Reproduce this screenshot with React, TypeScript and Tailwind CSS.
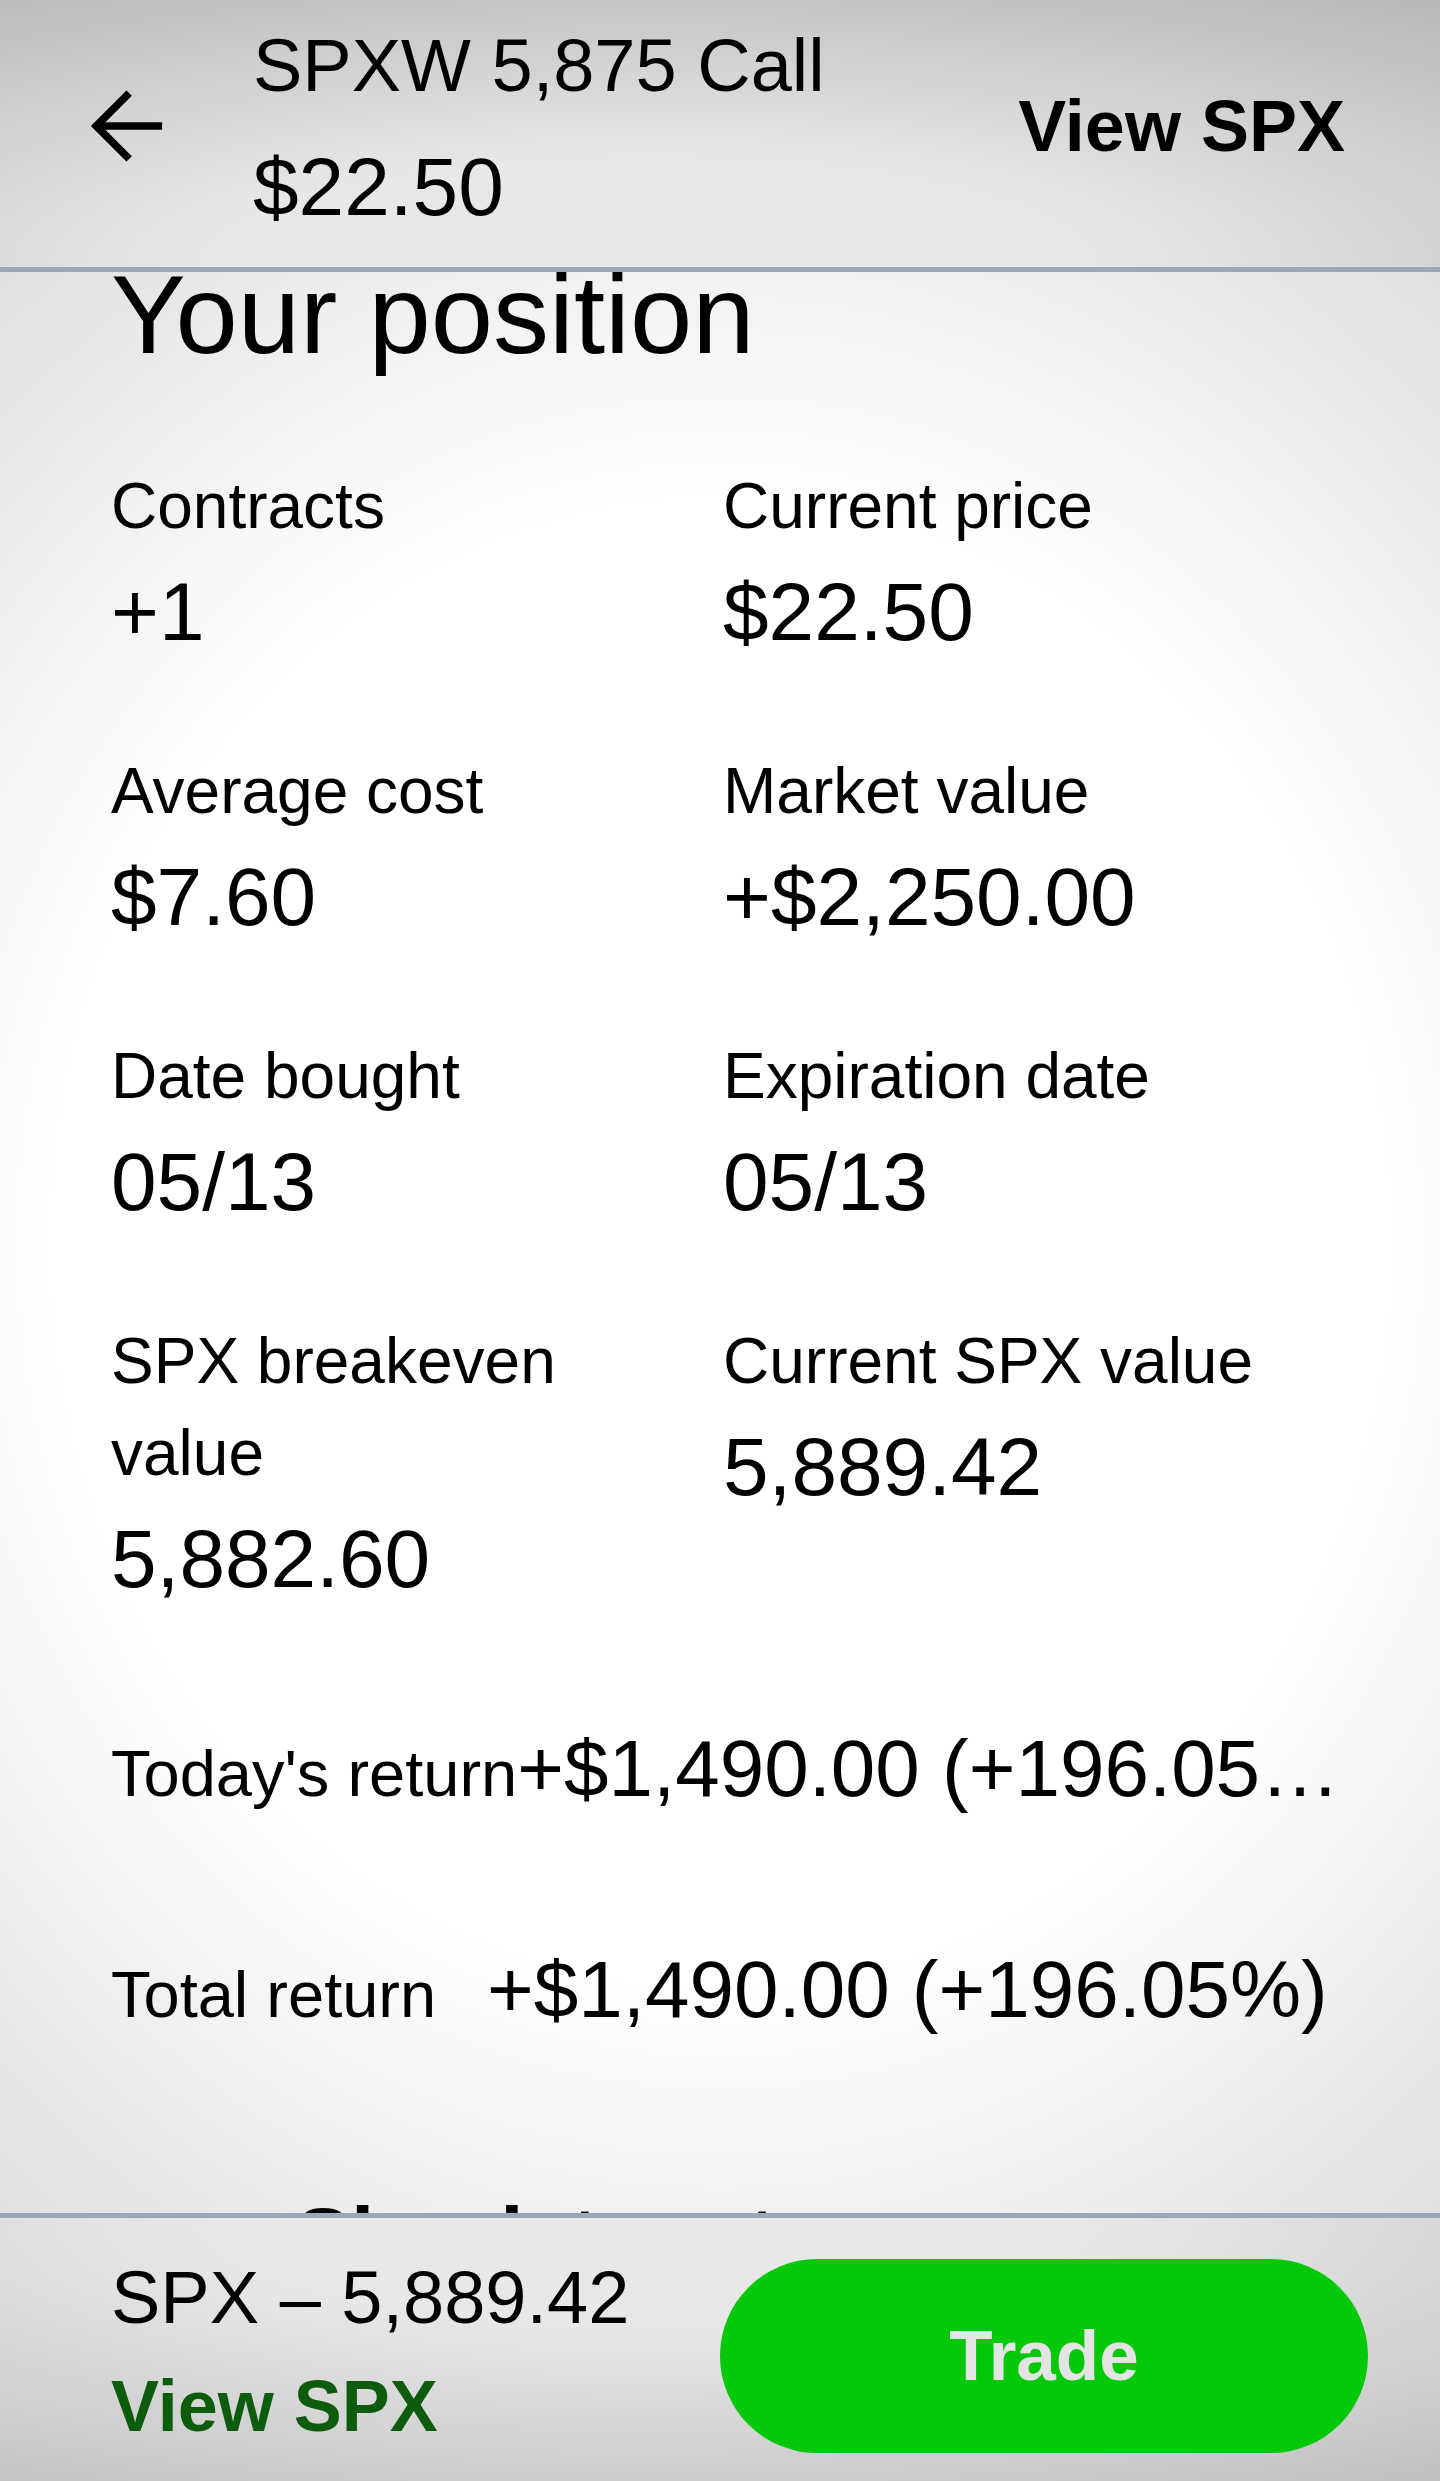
import React from 'react';

type Stat = { label: string; value: string };

const stats: Stat[] = [
  { label: 'Contracts', value: '+1' },
  { label: 'Current price', value: '$22.50' },
  { label: 'Average cost', value: '$7.60' },
  { label: 'Market value', value: '+$2,250.00' },
  { label: 'Date bought', value: '05/13' },
  { label: 'Expiration date', value: '05/13' },
  { label: 'SPX breakeven value', value: '5,882.60' },
  { label: 'Current SPX value', value: '5,889.42' },
];

function BackArrow() {
  return (
    <svg width="76" height="76" viewBox="0 0 24 24" fill="none" stroke="#000" strokeWidth="2.4">
      <path d="M2.8 12H23.4" />
      <path d="M13 1.6 2.6 12 13 22.4" />
    </svg>
  );
}

function SimulateIcon() {
  return (
    <svg width="130" height="90" viewBox="0 0 130 90" fill="none" stroke="#000" strokeWidth="6">
      <circle cx="36" cy="29" r="3" fill="#000" stroke="none" />
      <path d="M89 21 78 37h22Z" fill="#000" stroke="none" />
      <path d="M89 36v48" />
      <path d="M36 33v51" />
    </svg>
  );
}

export default function App() {
  return (
    <div className="w-[1440px] h-[2481px] flex flex-col overflow-hidden font-['Liberation_Sans',Arial,sans-serif] text-black">
      {/* top bar */}
      <header className="h-[272px] shrink-0 flex items-center pb-[16px] border-b-[5px] border-[#9aa7b4] bg-[radial-gradient(ellipse_120%_160%_at_45%_100%,#e8e8e8_25%,#a2a2a2_100%)] shadow-[0_3px_0_#d8dee4]">
        <div className="ml-[88px]">
          <BackArrow />
        </div>
        <div className="ml-[89px] flex flex-col">
          <span className="text-[74px] leading-[121px]">SPXW 5,875 Call</span>
          <span className="text-[82px] leading-[121px]">$22.50</span>
        </div>
        <span className="ml-auto mr-[95px] text-[72px] font-bold">View SPX</span>
      </header>

      <main className="flex-1 min-h-0 overflow-hidden pl-[111px] pr-[96px] bg-[radial-gradient(ellipse_85%_70%_at_50%_50%,#ffffff_55%,#dadada_100%)]">
        <h1 className="text-[112px] leading-[86px]">Your position</h1>

        <div className="mt-[102px] grid grid-cols-[612px_1fr] gap-y-[73px]">
          {stats.map((s) => (
            <div key={s.label} className="flex flex-col pr-[40px]">
              <span className="text-[64px] leading-[92px]">{s.label}</span>
              <span className="text-[82px] leading-[120px]">{s.value}</span>
            </div>
          ))}
        </div>

        <div className="mt-[90px] flex items-baseline leading-[120px]">
          <span className="shrink-0 min-w-[376px] text-[65px]">Today's return</span>
          <span className="min-w-0 truncate text-[80px]">+$1,490.00 (+196.05%)</span>
        </div>

        <div className="mt-[96px] flex items-baseline leading-[120px]">
          <span className="shrink-0 min-w-[376px] text-[65px]">Total return</span>
          <span className="min-w-0 truncate text-[80px]">+$1,490.00 (+196.05%)</span>
        </div>

        <div className="mt-[122px] flex items-center h-[120px]">
          <SimulateIcon />
          <span className="ml-[54px] text-[84px] font-bold leading-[120px]">Simulate returns</span>
        </div>
      </main>

      {/* bottom bar */}
      <footer className="h-[268px] shrink-0 flex border-t-[5px] border-[#9aa7b4] pl-[111px] pr-[72px] bg-[radial-gradient(ellipse_120%_160%_at_45%_0%,#e8e8e8_25%,#b0b0b0_100%)]">
        <div className="flex flex-col pt-[30px]">
          <span className="text-[74px] leading-[100px]">SPX – 5,889.42</span>
          <span className="text-[72px] leading-[116px] font-bold text-[#0d5c0d]">View SPX</span>
        </div>
        <button className="ml-auto mt-[41px] w-[648px] h-[194px] rounded-full bg-[#05c80a] text-[#e4e4e4] text-[71px] font-bold">
          Trade
        </button>
      </footer>
    </div>
  );
}
